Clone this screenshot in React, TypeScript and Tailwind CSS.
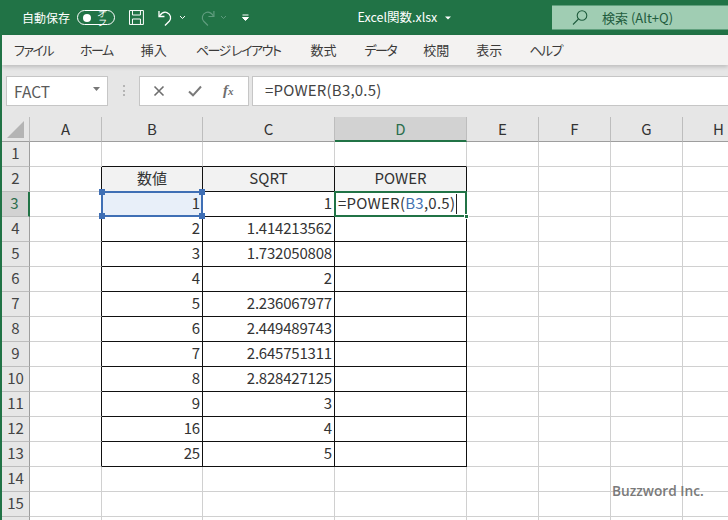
import React from "react";

const FONT = "[font-family:'Noto_Sans_CJK_JP','Noto_Sans',sans-serif]";

const COLS = ["A", "B", "C", "D", "E", "F", "G", "H"];
const TABS: [string, string][] = [
  ["ファイル", "whitespace-nowrap tracking-[-1.5px]"],
  ["ホーム", "whitespace-nowrap tracking-[-1.5px]"],
  ["挿入", "ml-[1px] whitespace-nowrap"],
  ["ページ レイアウト", "ml-[2px] whitespace-nowrap tracking-[-1.5px]"],
  ["数式", "ml-[3px] whitespace-nowrap"],
  ["データ", "ml-[1px] whitespace-nowrap tracking-[-1.5px]"],
  ["校閲", "whitespace-nowrap"],
  ["表示", "whitespace-nowrap"],
  ["ヘルプ", "whitespace-nowrap tracking-[-1.5px]"],
];
const DATA: [string, string][] = [
  ["1", "1"],
  ["2", "1.414213562"],
  ["3", "1.732050808"],
  ["4", "2"],
  ["5", "2.236067977"],
  ["6", "2.449489743"],
  ["7", "2.645751311"],
  ["8", "2.828427125"],
  ["9", "3"],
  ["16", "4"],
  ["25", "5"],
];

function TitleBar() {
  return (
    <div className="flex h-[35px] shrink-0 items-center bg-[#217346] text-white">
      <span className="ml-[20px] w-[48px] whitespace-nowrap text-[12px]">自動保存</span>
      <div className="ml-[7px] flex h-[15px] w-[38px] items-center rounded-full border border-white pl-[5px]">
        <div className="h-[8px] w-[8px] rounded-full bg-white" />
        <span className="ml-[6px] text-[9px] italic leading-none">オフ</span>
      </div>
      <svg className="ml-[13px]" width="17" height="17" viewBox="0 0 17 17" fill="none" stroke="#fff" strokeWidth="1">
        <path d="M1.5 1.5h14v14h-14z" />
        <path d="M4.5 1.5v4.5h8v-4.5M4.5 15.5v-5.5h8v5.5" />
      </svg>
      <svg className="ml-[12px]" width="18" height="18" viewBox="0 0 18 18" fill="none" stroke="#fff" strokeWidth="1.3">
        <path d="M2 2v5.5h5.5" />
        <path d="M2.5 7c2-3 4.5-4.5 7.5-3.5 4 1.5 4.5 6 2.5 8.5l-4.5 4.5" />
      </svg>
      <svg className="ml-[4px]" width="7" height="5" viewBox="0 0 7 5" fill="none" stroke="#fff" strokeWidth="1">
        <path d="M1 1l2.5 2.5L6 1" />
      </svg>
      <svg className="ml-[12px]" width="18" height="18" viewBox="0 0 18 18" fill="none" stroke="#5f9c7e" strokeWidth="1.2">
        <path d="M16 2v5.5h-5.5" />
        <path d="M15.5 7c-2-3-4.5-4.5-7.5-3.5-4 1.5-4.5 6-2.5 8.5l4.5 4.5" />
      </svg>
      <svg className="ml-[4px]" width="7" height="5" viewBox="0 0 7 5" fill="none" stroke="#5f9c7e" strokeWidth="1">
        <path d="M1 1l2.5 2.5L6 1" />
      </svg>
      <svg className="ml-[16px]" width="7" height="8" viewBox="0 0 7 8" fill="none" stroke="#fff" strokeWidth="1">
        <path d="M0.5 1h6" />
        <path d="M0.5 3.5l3 3 3-3z" fill="#fff" />
      </svg>
      <span className="ml-[108px] w-[81px] whitespace-nowrap text-[12.5px]">Excel関数.xlsx</span>
      <svg className="ml-[7px]" width="6" height="4" viewBox="0 0 6 4" fill="#fff">
        <path d="M0 0.5h6l-3 3z" />
      </svg>
      <div className="ml-[101px] flex h-[24px] w-[177px] -translate-y-[0.5px] items-center bg-[#a0cdb3] text-[#1f5c3d]">
        <svg className="ml-[20px]" width="16" height="16" viewBox="0 0 16 16" fill="none" stroke="#1f5c3d" strokeWidth="1.1">
          <circle cx="10" cy="6" r="4.8" />
          <path d="M6.5 9.5L1 15" />
        </svg>
        <span className="ml-[14px] whitespace-nowrap text-[13px]">検索 (Alt+Q)</span>
      </div>
    </div>
  );
}

function Ribbon() {
  return (
    <div className="relative z-10 flex h-[30px] shrink-0 items-center gap-[27px] bg-[#f3f2f1] pl-[12px] text-[13px] text-[#3b3a39] shadow-[0_2px_4px_rgba(0,0,0,0.18)] [font-feature-settings:'palt']">
      {TABS.map(([t, cls]) => (
        <span key={t} className={cls}>
          {t}
        </span>
      ))}
    </div>
  );
}

function FormulaBar() {
  return (
    <div className="flex h-[52px] shrink-0 items-start bg-[#e6e6e6] pt-[11px]">
      <div className="ml-[4px] flex h-[30px] w-[102px] items-center justify-between border border-[#c6c6c6] bg-white pl-[7px] pr-[7px] text-[15.5px] text-[#5a5a5a]">
        <span className="translate-y-[1px]">FACT</span>
        <svg className="-translate-y-[2px]" width="7" height="4" viewBox="0 0 7 4" fill="#777">
          <path d="M0 0h7L3.5 4z" />
        </svg>
      </div>
      <div className="ml-[15px] mt-[9px] flex h-[11px] w-[2px] flex-col justify-between">
        <div className="h-[2px] w-[2px] bg-[#b5b5b5]" />
        <div className="h-[2px] w-[2px] bg-[#b5b5b5]" />
        <div className="h-[2px] w-[2px] bg-[#b5b5b5]" />
      </div>
      <div className="ml-[14px] flex h-[30px] w-[110px] items-center border border-[#c6c6c6] bg-white pl-[13px]">
        <svg width="12" height="12" viewBox="0 0 12 12" fill="none" stroke="#6e6e6e" strokeWidth="1.6">
          <path d="M1.5 1.5l9 9M10.5 1.5l-9 9" />
        </svg>
        <svg className="ml-[23px]" width="14" height="12" viewBox="0 0 14 12" fill="none" stroke="#7a7a7a" strokeWidth="2">
          <path d="M1 6.5l4 3.8L13 1.5" />
        </svg>
        <span className="ml-[21px] translate-y-[-1px] [font-family:'Liberation_Serif',serif] text-[15px] font-bold italic leading-none text-[#6e6e6e]">
          f<span className="text-[11px]">x</span>
        </span>
      </div>
      <div className="ml-[3px] flex h-[30px] flex-1 items-center border border-r-0 border-[#c6c6c6] bg-white pb-[1px] pl-[12px] text-[15px] tracking-[0.2px] text-[#444]">
        =POWER(B3,0.5)
      </div>
    </div>
  );
}

function ColHeaders() {
  return (
    <>
      <div className="flex items-end justify-center border-b border-r border-b-[#9e9e9e] border-r-[#bdbdbd] bg-[#e6e6e6] pb-[3px]">
        <svg width="17" height="17" viewBox="0 0 17 17">
          <path d="M17 0v17H0z" fill="#b4b4b4" />
        </svg>
      </div>
      {COLS.map((c) =>
        c === "D" ? (
          <div
            key={c}
            className="flex items-center justify-center border-b-2 border-r border-b-[#217346] border-r-[#bdbdbd] bg-[#d2d2d2] pt-[2px] text-[15px] text-[#2c6e4d]"
          >
            {c}
          </div>
        ) : (
          <div
            key={c}
            className="flex items-center justify-center border-b border-r border-b-[#9e9e9e] border-r-[#bdbdbd] bg-[#e6e6e6] text-[15px] text-[#333]"
          >
            {c}
          </div>
        )
      )}
    </>
  );
}

function RowHeader({ n }: { n: number | null }) {
  return n === 3 ? (
    <div className="flex items-center justify-center border-b border-r-2 border-b-[#bdbdbd] border-r-[#217346] bg-[#d2d2d2] pb-[1px] pr-[1px] text-[15px] text-[#2c6e4d]">
      {n}
    </div>
  ) : (
    <div className="flex items-center justify-center border-b border-r border-b-[#bdbdbd] border-r-[#9e9e9e] bg-[#e6e6e6] pb-[1px] text-[15px] text-[#444]">
      {n}
    </div>
  );
}

function Blank({ bottomBlack, rightBlack }: { bottomBlack?: boolean; rightBlack?: boolean }) {
  return (
    <div
      className={`border-b border-r ${bottomBlack ? "border-b-[#111]" : "border-b-[#d0d0d0]"} ${
        rightBlack ? "border-r-[#111]" : "border-r-[#d0d0d0]"
      }`}
    />
  );
}

function Handle({ cls }: { cls: string }) {
  return <div className={`absolute h-[6px] w-[6px] bg-[#3f6fb5] ${cls}`} />;
}

function TableRow({ n, a, b, index }: { n: number; a: string; b: string; index: number }) {
  const num = "flex items-center justify-end border-b border-r border-[#111] pb-[1px] pr-[2px] text-[15px] tracking-[-0.2px] text-[#333]";
  return (
    <>
      <RowHeader n={n} />
      <Blank rightBlack />
      {index === 0 ? (
        <div className="relative flex items-center justify-end border-b border-r border-[#111] bg-[#e8eff9] pb-[1px] pr-[2px] text-[15px] text-[#333]">
          {a}
          <div className="absolute -left-[1px] -right-[1px] -top-[1px] -bottom-[1px] border-2 border-[#3f6fb5]" />
          <Handle cls="-left-[3px] -top-[3px]" />
          <Handle cls="-right-[3px] -top-[3px]" />
          <Handle cls="-left-[3px] -bottom-[3px]" />
          <Handle cls="-right-[3px] -bottom-[3px]" />
        </div>
      ) : (
        <div className={num}>{a}</div>
      )}
      <div className={num}>{b}</div>
      {index === 0 ? (
        <div className="relative flex items-center border-b border-r border-[#111] pb-[1px] pl-[3px] text-[15px] tracking-[0.25px] text-[#333]">
          <span>
            =POWER(<span className="text-[#4472b0]">B3</span>,0.5)
          </span>
          <div className="ml-[1px] h-[20px] w-px bg-[#222]" />
          <div className="absolute -left-[1px] -right-[1px] -top-[1px] -bottom-[1px] border-2 border-[#217346]" />
          <div className="absolute -bottom-[3px] -right-[3px] h-[5px] w-[5px] border border-white bg-[#217346]" />
        </div>
      ) : (
        <div className="border-b border-r border-[#111]" />
      )}
      <Blank />
      <Blank />
      <Blank />
      <Blank />
    </>
  );
}

export default function App() {
  return (
    <div className={`relative flex h-[520px] w-[728px] flex-col overflow-hidden border-l-2 border-l-[#217346] bg-white ${FONT}`}>
      <TitleBar />
      <Ribbon />
      <FormulaBar />
      <div className="grid grid-cols-[28px_72px_101px_132px_132px_72px_72px_72px_72px] auto-rows-[25px]">
        <ColHeaders />
        {/* row 1 */}
        <RowHeader n={1} />
        <Blank />
        <Blank bottomBlack />
        <Blank bottomBlack />
        <Blank bottomBlack />
        <Blank />
        <Blank />
        <Blank />
        <Blank />
        {/* row 2 */}
        <RowHeader n={2} />
        <Blank rightBlack />
        {["数値", "SQRT", "POWER"].map((h) => (
          <div key={h} className="flex items-center justify-center border-b border-r border-[#111] bg-[#f2f2f2] pb-[1px] text-[15px] text-[#333]">
            {h}
          </div>
        ))}
        <Blank />
        <Blank />
        <Blank />
        <Blank />
        {DATA.map(([a, b], i) => (
          <TableRow key={i} n={i + 3} a={a} b={b} index={i} />
        ))}
        {[14, 15, null].map((n, i) => (
          <React.Fragment key={i}>
            <RowHeader n={n} />
            <Blank />
            <Blank />
            <Blank />
            <Blank />
            <Blank />
            <Blank />
            <Blank />
            <Blank />
          </React.Fragment>
        ))}
      </div>
      <div className="absolute left-[610px] top-[481px] whitespace-nowrap [font-family:'Open_Sans',sans-serif] text-[13.7px] font-semibold text-[#7a7a7a]">
        Buzzword Inc.
      </div>
    </div>
  );
}
